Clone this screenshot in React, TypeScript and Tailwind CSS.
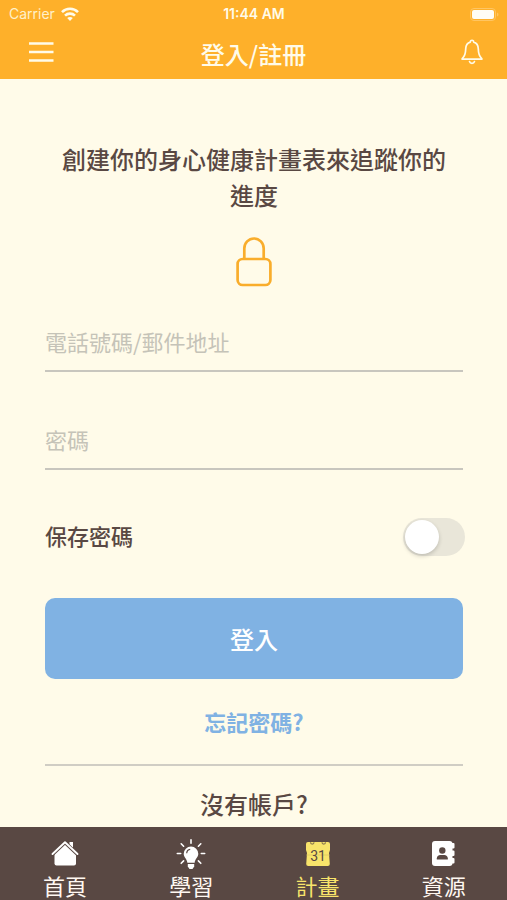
import { useState } from 'react';
import type { ReactNode } from 'react';

function WifiIcon() {
  return (
    <svg width="18" height="14" viewBox="0 0 18 14" fill="none" stroke="#fffbe9" strokeWidth="2.6" aria-hidden="true">
      <path d="M1 5.1C5.4.7 12.600.7 17 5.100" />
      <path d="M4 8.600c2.800-2.700 7.200-2.700 10 0" />
      <path d="M9 13.900 6.200 11.100c1.600-1.500 4-1.500 5.600 0z" fill="#fffbe9" stroke="none" />
    </svg>
  );
}

function BatteryIcon() {
  return (
    <svg width="29" height="13" viewBox="0 0 29 13" aria-hidden="true">
      <rect x="0.500" y="0.500" width="25" height="12" rx="3.500" fill="none" stroke="#ffc561" />
      <rect x="2" y="2" width="22" height="9" rx="2" fill="#fffdf5" />
      <path d="M27 4.500c2 .8 2 3.200 0 4z" fill="#ffc561" />
    </svg>
  );
}

function MenuIcon() {
  return (
    <svg width="26" height="22" viewBox="0 0 26 22" stroke="#fffbe9" strokeWidth="2.700" aria-hidden="true">
      <path d="M1 2.500h24.500M1 11h24.500M1 19.500h24.500" />
    </svg>
  );
}

function BellIcon() {
  return (
    <svg width="22" height="26" viewBox="0 0 22 26" fill="none" stroke="#fffbe9" strokeWidth="1.700" strokeLinecap="round" strokeLinejoin="round" aria-hidden="true">
      <path d="M9.300 3.100C9.300.6 12.700.6 12.700 3.100c3.200.8 4.500 3.400 4.600 6.900.1 5 .9 7.400 3.500 9.600v.6H1.200v-.6C3.800 17.400 4.600 15 4.700 10c.1-3.500 1.400-6.100 4.600-6.900z" />
      <path d="M8.500 22.600c.8 2.400 4.200 2.400 5 0" />
    </svg>
  );
}

function LockIcon() {
  return (
    <svg width="36" height="50" viewBox="0 0 36 50" fill="none" stroke="#f9ad2b" strokeWidth="2.700" aria-hidden="true">
      <rect x="1.600" y="22" width="32.800" height="26" rx="5" />
      <path d="M8.300 22V11.500a9.700 10 0 0 1 19.400 0V22" />
    </svg>
  );
}

function HomeIcon() {
  return (
    <svg width="30" height="30" viewBox="0 0 30 30" aria-hidden="true">
      <path d="M15 6 26 16v10.500a2 2 0 0 1-2 2H6.500a2 2 0 0 1-2-2V16z" fill="#fff" />
      <path d="M19.500 5h3.500v7l-3.500-3z" fill="#fff" />
      <path d="M2.300 17.500 15 5.500l12.700 12" fill="none" stroke="#594843" strokeWidth="3.600" />
      <path d="M2.500 17 15 5.200 27.500 17" fill="none" stroke="#fff" strokeWidth="1.900" strokeLinecap="round" strokeLinejoin="round" />
    </svg>
  );
}

function BulbIcon() {
  return (
    <svg width="30" height="32" viewBox="0 -2 30 32" aria-hidden="true">
      <path d="M15 7.500a7.300 7.300 0 0 0-7.300 7.300c0 3.800 3.600 5.500 3.600 9h7.400c0-3.500 3.600-5.200 3.600-9A7.300 7.300 0 0 0 15 7.500z" fill="#fff" />
      <path d="M11.800 25h6.400v2.500L16.500 30h-3l-1.700-2.500z" fill="#fff" />
      <path d="M10.700 14.200c.1-2 1.400-3.500 3.500-3.800" fill="none" stroke="#594843" strokeWidth="1.200" />
      <path d="M15 .8v3.400M5.200 4.800l2.400 2.400M24.800 4.800l-2.400 2.400M1.300 14.500h3.400M25.300 14.500h3.400M5.200 24.300l2.400-2.400M24.800 24.300l-2.400-2.400" stroke="#fff" strokeWidth="1.600" strokeLinecap="round" />
    </svg>
  );
}

function CalendarIcon() {
  return (
    <svg width="30" height="30" viewBox="0 0 30 30" aria-hidden="true">
      <path d="M5 5h20a2 2 0 0 1 2 2v6l-1 3 .8 11a2 2 0 0 1-2 2H5.200a2 2 0 0 1-2-2L4 16l-1-3V7a2 2 0 0 1 2-2z" fill="#f8e46b" />
      <path d="M7.500 5.300c0 2.400 3.500 2.400 3.500 0M19 5.300c0 2.400 3.500 2.400 3.500 0" fill="none" stroke="#8d7a4e" strokeWidth="1.200" />
      <path d="M3.500 18h23" stroke="#dcc862" strokeWidth="0.800" />
      <text x="15" y="24" textAnchor="middle" fontSize="14" fill="#594843" className="font-['Roboto',sans-serif]">31</text>
    </svg>
  );
}

function ContactsIcon() {
  return (
    <svg width="30" height="30" viewBox="0 0 30 30" aria-hidden="true">
      <rect x="3" y="4" width="20.500" height="25" rx="3" fill="#fff" />
      <path d="M22 6h2.500a1 1 0 0 1 1 1v3.500a1 1 0 0 1-1 1H22zM22 13.500h2.500a1 1 0 0 1 1 1V18a1 1 0 0 1-1 1H22zM22 21h2.500a1 1 0 0 1 1 1v3.500a1 1 0 0 1-1 1H22z" fill="#fff" />
      <circle cx="13.300" cy="13.500" r="3.200" fill="#594843" />
      <path d="M7.800 22.500v-1.200c0-2 1.600-3.300 3.500-3.300h4c1.900 0 3.500 1.300 3.500 3.300v1.200z" fill="#594843" />
    </svg>
  );
}

const tabs: { label: string; icon: ReactNode; active?: boolean }[] = [
  { label: '首頁', icon: <HomeIcon /> },
  { label: '學習', icon: <BulbIcon /> },
  { label: '計畫', icon: <CalendarIcon />, active: true },
  { label: '資源', icon: <ContactsIcon /> },
];

const fieldClass =
  'block h-14 w-full border-b-2 border-[#c8c6be] bg-transparent pb-1 text-[22px] text-[#594843] outline-none placeholder:text-[#c5c3b8]';

export default function App() {
  const [remember, setRemember] = useState(false);

  return (
    <div lang="zh-Hant" className="flex h-screen flex-col bg-[#fffbe9] font-['Noto_Sans_CJK_TC',sans-serif] text-[#594843]">
      <header className="shrink-0 bg-[#feb02a] text-[#fffbe9]">
        <div className="grid h-7 grid-cols-3 items-center pr-2 pl-[9px] font-['Inter',sans-serif] text-sm">
          <div className="flex items-center gap-1.5">
            <span className="text-[#fff0c9]">Carrier</span>
            <WifiIcon />
          </div>
          <time className="text-center font-semibold">11:44 AM</time>
          <div className="flex justify-end">
            <BatteryIcon />
          </div>
        </div>
        <div className="grid h-[51px] grid-cols-[1fr_auto_1fr] items-center px-6">
          <button type="button" aria-label="選單" className="justify-self-start pb-1 pl-1">
            <MenuIcon />
          </button>
          <h1 className="text-2xl leading-8 font-medium">登入/註冊</h1>
          <button type="button" aria-label="通知" className="justify-self-end pb-1">
            <BellIcon />
          </button>
        </div>
      </header>

      <main className="min-h-0 flex-1 overflow-hidden px-11 pt-[62px]">
        <div className="pl-px">
          <h2 className="px-2 text-center text-2xl leading-9 font-medium">創建你的身心健康計畫表來追蹤你的進度</h2>
          <div className="mt-6 flex justify-center">
            <LockIcon />
          </div>
          <form className="mt-[29px]" onSubmit={(event) => event.preventDefault()}>
            <div className="flex flex-col gap-[42px]">
              <input type="text" aria-label="電話號碼/郵件地址" placeholder="電話號碼/郵件地址" className={fieldClass} />
              <input type="password" aria-label="密碼" placeholder="密碼" className={fieldClass} />
            </div>
            <div className="mt-12 flex h-[38px] items-center justify-between">
              <label htmlFor="remember" className="pb-1 text-[22px] leading-8 font-medium">
                保存密碼
              </label>
              <input
                id="remember"
                type="checkbox"
                role="switch"
                checked={remember}
                onChange={(event) => setRemember(event.target.checked)}
                className="-mr-0.5 h-[38px] w-[62px] cursor-pointer appearance-none rounded-full bg-[#e9e6d9] p-0.5 before:block before:size-[34px] before:rounded-full before:bg-white before:shadow-[0_2px_4px_rgba(0,0,0,0.18)] checked:bg-[#80b2e3] checked:before:translate-x-6"
              />
            </div>
            <button type="submit" className="mt-[42px] block h-[81px] w-full rounded-[10px] bg-[#80b2e3] text-2xl font-medium text-white">
              登入
            </button>
          </form>
          <div className="mt-[26px] border-b-2 border-[#d0cdc4] pb-[27px] text-center">
            <a href="#forgot" className="block text-[22px] leading-8 font-bold text-[#80b2e3]">
              忘記密碼?
            </a>
          </div>
          <p className="mt-5 text-center text-2xl leading-9 font-medium">沒有帳戶?</p>
        </div>
      </main>

      <nav className="grid h-[73px] shrink-0 grid-cols-4 bg-[#594843] pl-0.5">
        {tabs.map((tab) => (
          <a
            key={tab.label}
            href="#tab"
            aria-current={tab.active ? 'page' : undefined}
            className={`flex flex-col items-center pt-2.5 text-[22px] leading-7 ${tab.active ? 'text-[#f8e46b]' : 'text-[#fff8f2]'}`}
          >
            <span className="h-[34px]">{tab.icon}</span>
            <span>{tab.label}</span>
          </a>
        ))}
      </nav>
    </div>
  );
}
